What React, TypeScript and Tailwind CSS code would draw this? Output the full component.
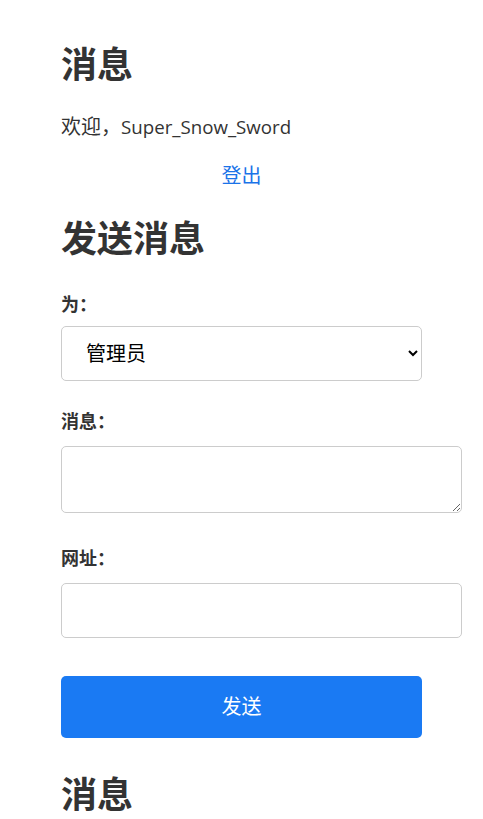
import React from "react";

export default function App() {
  return (
    <div
      className="min-h-[819px] bg-white text-[#333] pl-[61px] pr-[21px] pt-[38px]"
      style={{ fontFamily: '"Open Sans", "Noto Sans CJK SC", sans-serif' }}
    >
      <h1 className="text-[36px] font-bold leading-[54px]">消息</h1>
      <p className="text-[18.7px] leading-[28px] mt-[21px]">
        <span className="text-[20px]">欢迎，</span>Super_Snow_Sword
      </p>
      <div className="w-[361px] text-center mt-[20px]">
        <a href="#" className="text-[20px] leading-[30px] text-[#1a73e8]">登出</a>
      </div>
      <h2 className="text-[36px] font-bold leading-[54px] mt-[21px]">发送消息</h2>
      <form className="mt-[25px]" onSubmit={(e) => e.preventDefault()}>
        <label className="block text-[18px] font-bold leading-[27px]">为：</label>
        <select className="mt-[8px] block w-[361px] h-[55px] border border-[#ccc] rounded-[5px] pl-[20px] pr-[8px] text-[20px] text-black bg-white">
          <option>管理员</option>
        </select>
        <label className="block mt-[27px] text-[18px] font-bold leading-[27px]">消息：</label>
        <textarea className="mt-[11px] block w-[401px] h-[67px] border border-[#ccc] rounded-[5px] p-2 text-[18px] bg-white" />
        <label className="block mt-[32px] text-[18px] font-bold leading-[27px]">网址：</label>
        <input className="mt-[11px] block w-[401px] h-[55px] border border-[#ccc] rounded-[5px] p-2 text-[18px] bg-white" />
        <button className="mt-[38px] block w-[361px] h-[62px] rounded-[5px] bg-[#1a7af3] text-white text-[20px]">发送</button>
      </form>
      <h2 className="text-[36px] font-bold leading-[54px] mt-[30px]">消息</h2>
    </div>
  );
}
